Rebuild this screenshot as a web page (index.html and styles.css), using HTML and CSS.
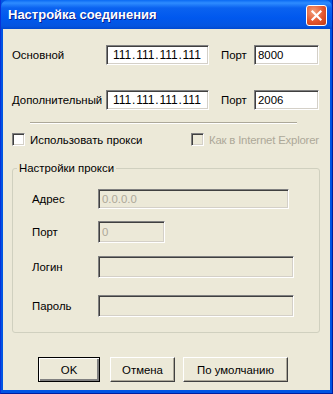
FILE: index.html
```html
<!DOCTYPE html>
<html>
<head>
<meta charset="utf-8">
<link rel="stylesheet" href="styles.css">
</head>
<body>
<div class="window">
  <div class="titlebar">
    <span class="title">Настройка соединения</span>
    <span class="close"><svg width="13" height="13" viewBox="0 0 13 13"><path d="M2.5 2.5 L10.5 10.5 M10.5 2.5 L2.5 10.5" stroke="#fff" stroke-width="2.2" stroke-linecap="square"/></svg></span>
  </div>
  <div class="client">
    <div class="row">
      <span class="lbl">Основной</span>
      <span class="field ip">111<i>.</i>111<i>.</i>111<i>.</i>111</span>
      <span class="plbl">Порт</span>
      <span class="field port">8000</span>
    </div>
    <div class="row row2">
      <span class="lbl">Дополнительный</span>
      <span class="field ip">111<i>.</i>111<i>.</i>111<i>.</i>111</span>
      <span class="plbl">Порт</span>
      <span class="field port">2006</span>
    </div>
    <div class="sep"></div>
    <div class="checks">
      <span class="chk"></span><span class="chklbl first">Использовать прокси</span>
      <span class="chk dis"></span><span class="chklbl grey">Как в Internet Explorer</span>
    </div>
    <fieldset class="group">
      <legend>Настройки прокси</legend>
      <div class="prow r1"><span class="glbl">Адрес</span><span class="field dfield wide1">0.0.0.0</span></div>
      <div class="prow r2"><span class="glbl">Порт</span><span class="field dfield short">0</span></div>
      <div class="prow r3"><span class="glbl">Логин</span><span class="field dfield wide2"></span></div>
      <div class="prow r4"><span class="glbl">Пароль</span><span class="field dfield wide2"></span></div>
    </fieldset>
    <div class="buttons">
      <span class="btn def">OK</span>
      <span class="btn b2">Отмена</span>
      <span class="btn b3">По умолчанию</span>
    </div>
  </div>
</div>
</body>
</html>
```
FILE: styles.css
```css
html, body { margin: 0; padding: 0; }
body { width: 333px; height: 394px; overflow: hidden; background: #fff; }
.window {
  width: 333px; height: 394px; box-sizing: border-box;
  background: #0054e3;
  border-left: 1px solid #0831d9; border-right: 1px solid #001ea0; border-bottom: 1px solid #001ea0;
  display: flex; flex-direction: column;
  font-family: "Liberation Sans", Arial, sans-serif; font-size: 11.4px; color: #000;
}
.titlebar {
  height: 29px; flex: none;
  background: linear-gradient(#0a6af3 0px, #2e8cff 3px, #0a62f0 8px, #0058ee 18px, #0455e0 26px, #0048d0 29px);
  border-radius: 7px 7px 0 0;
  display: flex; align-items: center; justify-content: space-between;
  padding: 0 5px 0 7px;
}
.title {
  color: #fff; font-family: "Liberation Sans", Arial, sans-serif; font-weight: bold; font-size: 13px;
  text-shadow: 1px 1px 0 #0a1e8c;
}
.close {
  width: 19px; height: 19px; border: 1px solid #fff; border-radius: 3px;
  background: radial-gradient(circle at 35% 30%, #f3a07a, #e2552e 55%, #c03a15);
  display: flex; align-items: center; justify-content: center; margin-top: 1px;
}
.client {
  flex: 1; background: #ece9d8; margin: 0 2px 3px 2px;
  padding: 16px 0 0 9px; display: flex; flex-direction: column;
}
.row { display: flex; align-items: center; height: 20px; }
.row2 { margin-top: 25px; }
.lbl { width: 94px; }
.field {
  box-sizing: border-box; height: 20px; background: #fff;
  border-top: 1px solid #808080; border-left: 1px solid #808080;
  border-right: 1px solid #fff; border-bottom: 1px solid #fff;
  box-shadow: inset 1px 1px 0 #404040, inset -1px -1px 0 #d4d0c8;
  display: flex; align-items: center; padding-left: 3px; white-space: nowrap;
}
.ip { width: 103px; font-size: 12px; padding-left: 6px; }
.ip i { font-style: normal; margin: 0 0.8px; }
.plbl { margin-left: 12px; width: 33px; }
.port { width: 65px; }
.sep {
  margin: 12px 0 0 18px; width: 267px; height: 0;
  border-top: 1px solid #aca899; border-bottom: 1px solid #fff;
}
.checks { display: flex; align-items: center; margin-top: 9px; height: 13px; }
.chk {
  width: 13px; height: 13px; box-sizing: border-box; background: #fff;
  border-top: 1px solid #808080; border-left: 1px solid #808080;
  border-right: 1px solid #fff; border-bottom: 1px solid #fff;
  box-shadow: inset 1px 1px 0 #404040, inset -1px -1px 0 #d4d0c8; flex: none;
}
.chk.dis { background: #ece9d8; }
.chklbl { margin-left: 5px; }
.chklbl.first { width: 161px; }
.grey { color: #aca899; letter-spacing: -0.2px; }
.group {
  margin: 16px 0 0 0; padding: 0; width: 308px; height: 171px; box-sizing: border-box;
  border: 1px solid #d0d0bf; border-radius: 3px;
  display: flex; flex-direction: column; min-width: 0;
}
.group legend { margin-left: 4px; padding: 0 2px; font-size: 11.4px; }
.prow { display: flex; align-items: center; }
.glbl { width: 66px; margin-left: 19px; }
.r1 { margin-top: 15px; }
.r2 { margin-top: 12px; }
.r3 { margin-top: 13px; }
.r4 { margin-top: 17px; }
.dfield { background: #ece9d8; color: #aca899; height: 20px; }
.r2 .dfield, .r3 .dfield, .r4 .dfield { height: 22px; }
.wide1 { width: 191px; }
.short { width: 67px; }
.wide2 { width: 196px; }
.buttons { display: flex; margin: 24px 0 0 26px; }
.btn {
  box-sizing: border-box; height: 25px; display: flex; align-items: center; justify-content: center;
  background: #ece9d8;
  border-top: 1px solid #fff; border-left: 1px solid #fff;
  border-right: 1px solid #404040; border-bottom: 1px solid #404040;
  box-shadow: inset -1px -1px 0 #aca899;
}
.btn.def { width: 62px; border: 1px solid #000; box-shadow: inset 1px 1px 0 #fff, inset -2px -2px 0 #808080; }
.b2 { width: 65px; margin-left: 10px; }
.b3 { width: 105px; margin-left: 8px; }
```
